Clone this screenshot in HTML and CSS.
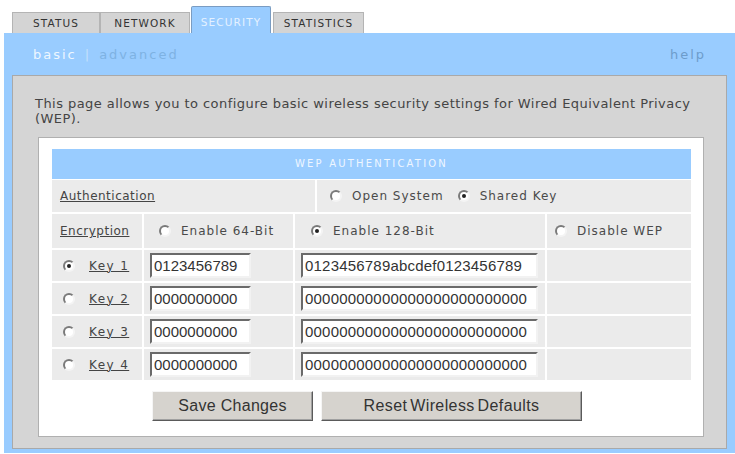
FILE: index.html
```html
<!DOCTYPE html>
<html lang="en">
<head>
  <meta charset="UTF-8">
  <title>Wireless Security - Basic</title>
  <link rel="stylesheet" href="styles.css">
</head>
<body>
  <div class="tabs">
    <span class="tab tab-status">STATUS</span>
    <span class="tab tab-network">NETWORK</span>
    <span class="tab tab-security active">SECURITY</span>
    <span class="tab tab-stats">STATISTICS</span>
  </div>
  <div class="frame">
    <div class="subnav">
      <span class="sub-on">basic</span>
      <span class="sub-sep">|</span>
      <span class="sub-off">advanced</span>
      <span class="sub-help">help</span>
    </div>
    <div class="panel">
      <p class="intro">This page allows you to configure basic wireless security settings for Wired Equivalent Privacy (WEP).</p>
      <div class="box">
        <div class="box-head">WEP AUTHENTICATION</div>
        <div class="auth">
          <div class="cell"><span class="label">Authentication</span></div>
          <div class="cell cell-opts">
            <span class="radio"></span><span class="opt">Open System</span>
            <span class="radio checked"></span><span class="opt">Shared Key</span>
          </div>
        </div>
        <div class="keys">
          <div class="cell"><span class="label">Encryption</span></div>
          <div class="cell cell-64"><span class="radio"></span><span class="opt">Enable 64-Bit</span></div>
          <div class="cell cell-128"><span class="radio checked"></span><span class="opt">Enable 128-Bit</span></div>
          <div class="cell cell-off"><span class="radio"></span><span class="opt">Disable WEP</span></div>

          <div class="cell cell-key"><span class="radio checked"></span><span class="label">Key 1</span></div>
          <div class="cell"><input class="key64" type="text" value="0123456789"></div>
          <div class="cell"><input class="key128" type="text" value="0123456789abcdef0123456789"></div>
          <div class="cell"></div>

          <div class="cell cell-key"><span class="radio"></span><span class="label">Key 2</span></div>
          <div class="cell"><input class="key64" type="text" value="0000000000"></div>
          <div class="cell"><input class="key128" type="text" value="00000000000000000000000000"></div>
          <div class="cell"></div>

          <div class="cell cell-key"><span class="radio"></span><span class="label">Key 3</span></div>
          <div class="cell"><input class="key64" type="text" value="0000000000"></div>
          <div class="cell"><input class="key128" type="text" value="00000000000000000000000000"></div>
          <div class="cell"></div>

          <div class="cell cell-key"><span class="radio"></span><span class="label">Key 4</span></div>
          <div class="cell"><input class="key64" type="text" value="0000000000"></div>
          <div class="cell"><input class="key128" type="text" value="00000000000000000000000000"></div>
          <div class="cell"></div>
        </div>
        <div class="buttons">
          <button class="btn btn-save" type="button">Save Changes</button>
          <button class="btn btn-reset" type="button">Reset Wireless Defaults</button>
        </div>
      </div>
    </div>
  </div>
</body>
</html>
```

FILE: styles.css
```css
* {
  box-sizing: border-box;
}
body {
  margin: 0;
  background: #fff;
  color: #4a4a4a;
  font-family: "DejaVu Sans", Verdana, sans-serif;
  font-size: 12px;
}

/* top tabs */
.tabs {
  display: flex;
  align-items: flex-end;
  height: 33px;
  padding-left: 12px;
}
.tab {
  height: 21px;
  line-height: 20px;
  text-align: center;
  font-size: 10.5px;
  letter-spacing: 1.1px;
  color: #333;
  background: #d4d4d4;
  border: 1px solid #b4b4b4;
  border-bottom: none;
}
.tab-status { width: 88px; }
.tab-network { width: 90px; }
.tab-security { width: 80px; margin-left: 1px; }
.tab-stats { width: 91px; margin-left: 2px; }
.tab.active {
  height: 27px;
  line-height: 30px;
  color: #e4f1ff;
  background: #99ccff;
  border-color: #7a9cc2;
  border-radius: 2px 2px 0 0;
}

/* blue frame */
.frame {
  margin-left: 4px;
  padding: 0 8px 4px 8px;
  background: #99ccff;
}
.subnav {
  display: flex;
  align-items: center;
  height: 42px;
  padding-left: 21px;
  padding-right: 21px;
  font-size: 13px;
  letter-spacing: 2px;
}
.sub-on {
  color: #eef7ff;
}
.sub-sep {
  color: #c4e0fb;
  margin: 0 8px 0 8px;
}
.sub-off {
  color: #7eb2e3;
}
.sub-help {
  margin-left: auto;
  color: #6d9ccb;
}

/* gray panel */
.panel {
  background: #d5d5d5;
  border: 1px solid #a9a9a9;
  padding: 20px 22px 11px 22px;
}
.intro {
  margin: 0 0 11px 0;
  font-size: 13px;
  line-height: 15px;
  letter-spacing: 0.45px;
  color: #444;
}
.box {
  margin-left: 3px;
  background: #fff;
  border: 1px solid #b0b0b0;
  padding: 11px 12px 15px 13px;
}
.box-head {
  height: 30px;
  line-height: 30px;
  text-align: center;
  background: #99ccff;
  color: #eef6ff;
  font-size: 10px;
  letter-spacing: 2.2px;
}

/* table rows */
.cell {
  display: flex;
  align-items: center;
  background: #ebebeb;
}
.auth {
  display: grid;
  grid-template-columns: 263px 1fr;
  grid-auto-rows: 32px;
  gap: 2px;
  margin-top: 1px;
}
.auth .cell {
  padding-left: 8px;
}
.auth .cell-opts {
  padding-left: 13px;
}
.keys {
  display: grid;
  grid-template-columns: 90px 149px 250px 1fr;
  grid-template-rows: 34px repeat(4, 31px);
  gap: 2px;
  margin-top: 2px;
}
.keys .cell {
  padding-left: 6px;
}
.keys .cell:first-child {
  padding-left: 8px;
}
.keys .cell-64 {
  padding-left: 15px;
}
.keys .cell-128 {
  padding-left: 16px;
}
.keys .cell-off {
  padding-left: 8px;
}
.keys .cell-key {
  padding-left: 11px;
}
.label {
  color: #444;
  text-decoration: underline;
  letter-spacing: 0.5px;
}
.opt {
  margin-left: 10px;
  margin-right: 14px;
  letter-spacing: 1px;
}
.cell-key .label {
  margin-left: 14px;
  letter-spacing: 1.4px;
}

/* classic radio */
.radio {
  position: relative;
  width: 12px;
  height: 12px;
  flex: none;
  border-radius: 50%;
  background: #fff;
  border: 2px solid;
  border-color: #7a7a7a #f4f4f4 #f4f4f4 #7a7a7a;
}
.radio.checked::after {
  content: "";
  position: absolute;
  left: 2px;
  top: 2px;
  width: 4px;
  height: 4px;
  border-radius: 50%;
  background: #222;
}

/* key fields */
input[type=text] {
  height: 25px;
  padding: 0 2px;
  font-family: "Liberation Sans", Arial, sans-serif;
  font-size: 15px;
  color: #333;
  background: #fff;
  border: 2px solid;
  border-color: #6a6a6a #f2f2f2 #f2f2f2 #6a6a6a;
  outline: none;
}
.key64 {
  width: 101px;
}
.key128 {
  width: 237px;
  font-size: 15.5px;
  letter-spacing: 0.2px;
}

/* buttons */
.buttons {
  display: flex;
  justify-content: center;
  gap: 8px;
  margin-top: 11px;
  padding-right: 9px;
}
.btn {
  height: 30px;
  font-family: "Liberation Sans", Arial, sans-serif;
  font-size: 16px;
  color: #333;
  background: #d6d3ce;
  border: 1px solid;
  border-color: #f5f5f5 #5a5a5a #5a5a5a #f5f5f5;
  box-shadow: inset -1px -1px 0 #a0a0a0;
  cursor: pointer;
}
.btn-save {
  width: 161px;
  letter-spacing: 0.3px;
}
.btn-reset {
  width: 261px;
  word-spacing: -2px;
  letter-spacing: 0.4px;
}
```
